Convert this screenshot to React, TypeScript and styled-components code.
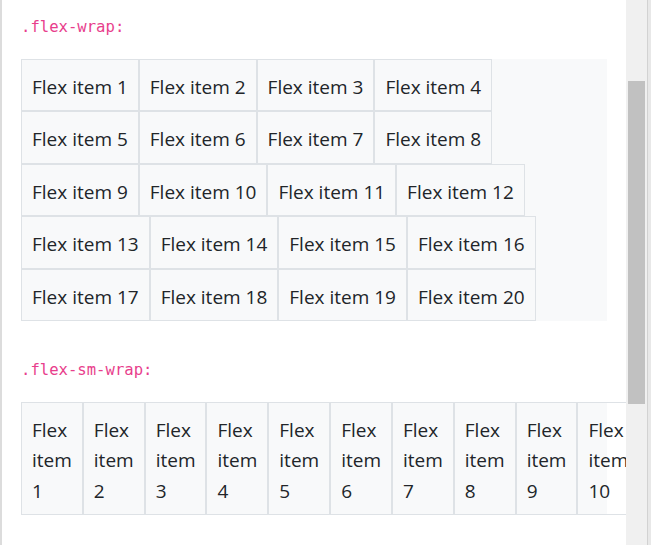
import styled, { createGlobalStyle } from 'styled-components'

const GlobalStyle = createGlobalStyle`
  html, body {
    margin: 0;
    padding: 0;
    background: #ffffff;
  }
  body {
    font-family: 'Open Sans', 'Noto Sans', sans-serif;
    color: #212529;
  }
`

const Page = styled.div`
  display: flex;
  height: 545px;
  overflow: hidden;
`

const Content = styled.main`
  flex: 1;
  min-width: 0;
  overflow: hidden;
  border-left: 2px solid #dcdcdc;
  padding: 16px 19px 0;
  display: flex;
  flex-direction: column;
  gap: 38px;
`

const Section = styled.section`
  display: flex;
  flex-direction: column;
`

const Label = styled.code`
  display: block;
  font-family: 'DejaVu Sans Mono', monospace;
  font-size: 15.6px;
  line-height: 23px;
  color: #e83e8c;
  margin-bottom: 20px;
`

const FlexBox = styled.div<{ $wrap: boolean }>`
  display: flex;
  flex-wrap: ${({ $wrap }) => ($wrap ? 'wrap' : 'nowrap')};
  width: 586px;
  background: #f8f9fa;
`

const Item = styled.div`
  padding: 12px 10px 8px;
  border: 1px solid #dee2e6;
  font-size: 19px;
  line-height: 30.4px;
`

const Scrollbar = styled.div`
  width: 25px;
  display: flex;
  flex-shrink: 0;
`

const Track = styled.div`
  width: 21px;
  background: #f0f0f0;
  padding: 81px 2px 0;
  box-sizing: border-box;
`

const Thumb = styled.div`
  height: 323px;
  background: #c1c1c1;
`

const Edge = styled.div`
  width: 4px;
  border-left: 1px solid #d2d2d2;
  background: #e8e8e8;
  box-sizing: border-box;
`

const items = Array.from({ length: 20 }, (_, i) => i + 1)
const smItems = Array.from({ length: 10 }, (_, i) => i + 1)

export default function App() {
  return (
    <Page>
      <GlobalStyle />
      <Content>
        <Section>
          <Label>.flex-wrap:</Label>
          <FlexBox $wrap>
            {items.map((n) => (
              <Item key={n}>Flex item {n}</Item>
            ))}
          </FlexBox>
        </Section>
        <Section>
          <Label>.flex-sm-wrap:</Label>
          <FlexBox $wrap={false}>
            {smItems.map((n) => (
              <Item key={n}>Flex item {n}</Item>
            ))}
          </FlexBox>
        </Section>
      </Content>
      <Scrollbar>
        <Track>
          <Thumb />
        </Track>
        <Edge />
      </Scrollbar>
    </Page>
  )
}
